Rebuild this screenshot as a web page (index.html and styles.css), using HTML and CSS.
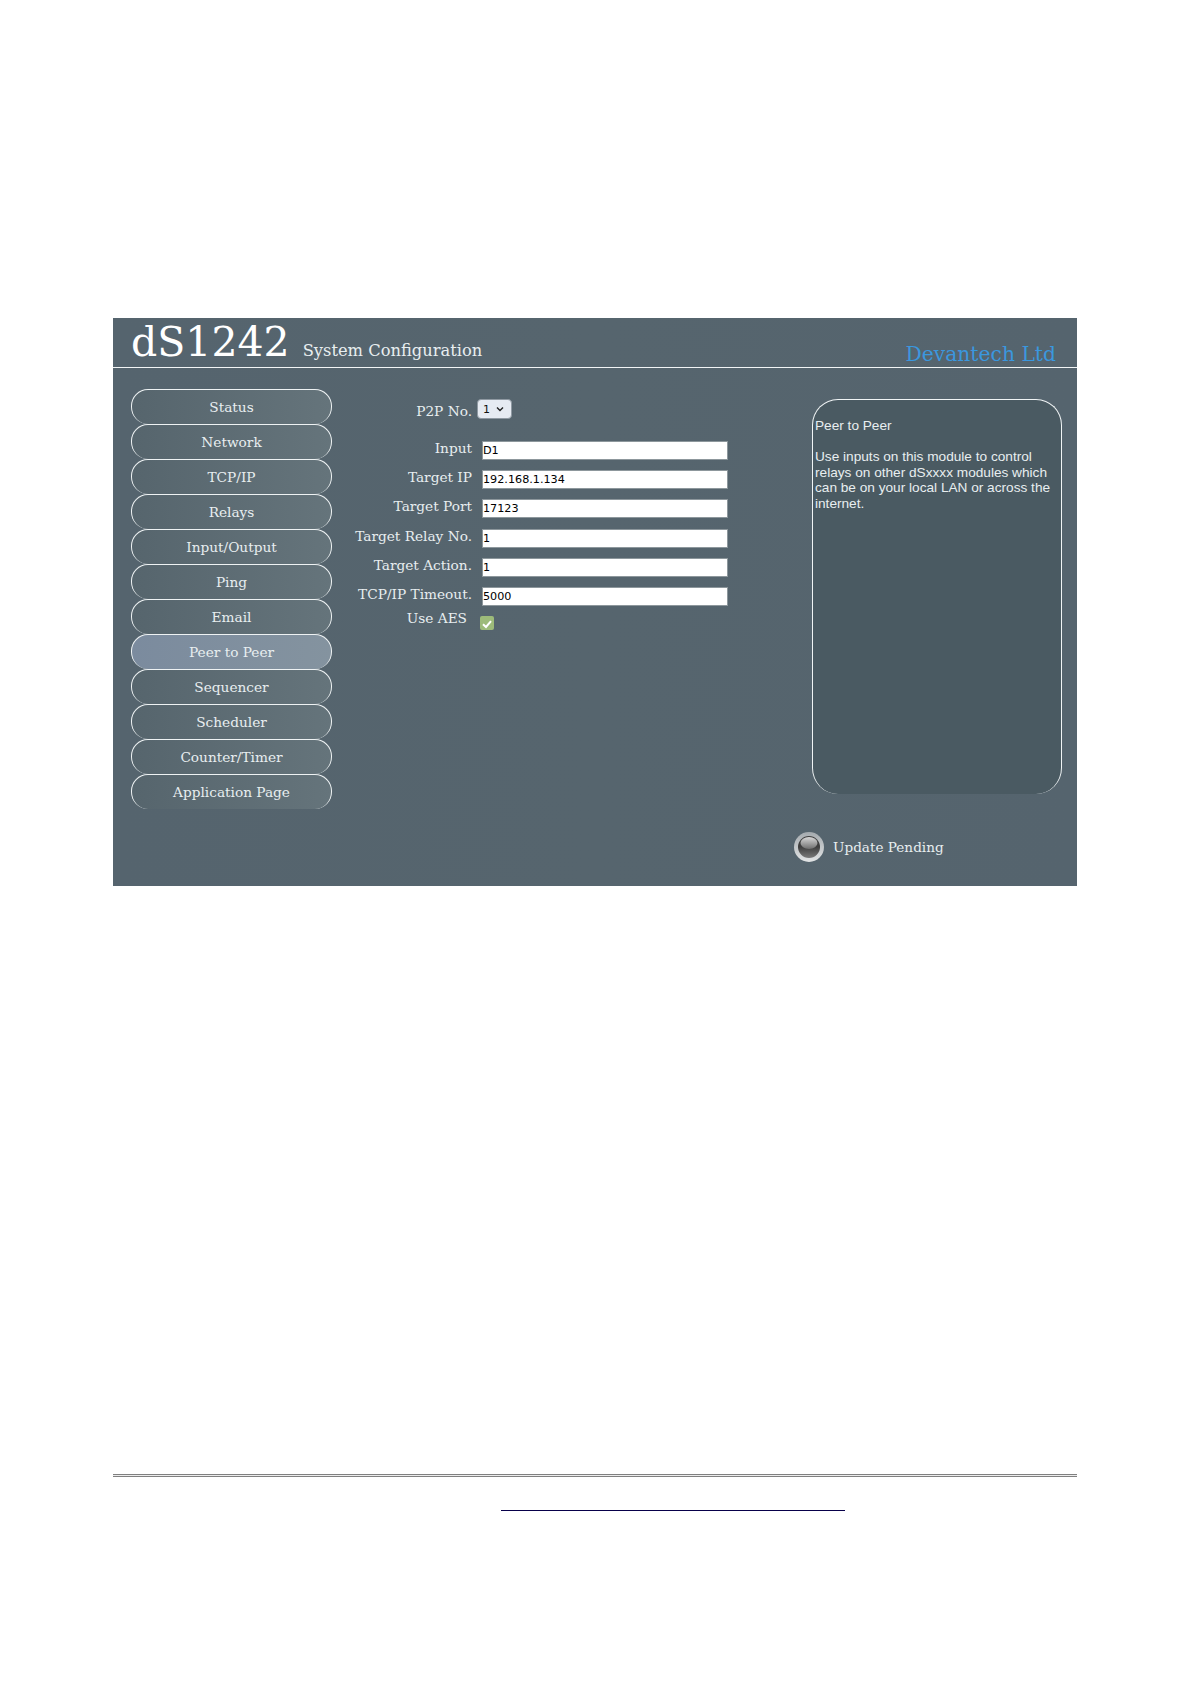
FILE: index.html
```html
<!DOCTYPE html>
<html lang="en">
<head>
    <meta charset="UTF-8">
    <title>dS1242 System Configuration</title>
    <link rel="stylesheet" href="styles.css">
</head>
<body>
    <div class="panel">
        <div class="header">
            <span class="model">dS1242</span>
            <span class="subtitle">System Configuration</span>
            <span class="brand">Devantech Ltd</span>
        </div>
        <div class="content">
            <div class="menu">
                <a class="menu-item">Status</a>
                <a class="menu-item">Network</a>
                <a class="menu-item">TCP/IP</a>
                <a class="menu-item">Relays</a>
                <a class="menu-item">Input/Output</a>
                <a class="menu-item">Ping</a>
                <a class="menu-item">Email</a>
                <a class="menu-item active">Peer to Peer</a>
                <a class="menu-item">Sequencer</a>
                <a class="menu-item">Scheduler</a>
                <a class="menu-item">Counter/Timer</a>
                <a class="menu-item">Application Page</a>
            </div>
            <div class="form">
                <div class="row select-row">
                    <label>P2P No.</label>
                    <div class="select">1 <svg width="8" height="6" viewBox="0 0 8 6"><path d="M1 1.5 L4 4.5 L7 1.5" fill="none" stroke="#222" stroke-width="1.4"/></svg></div>
                </div>
                <div class="row"><label>Input</label><input type="text" value="D1"></div>
                <div class="row"><label>Target IP</label><input type="text" value="192.168.1.134"></div>
                <div class="row"><label>Target Port</label><input type="text" value="17123"></div>
                <div class="row"><label>Target Relay No.</label><input type="text" value="1"></div>
                <div class="row"><label>Target Action.</label><input type="text" value="1"></div>
                <div class="row"><label>TCP/IP Timeout.</label><input type="text" value="5000"></div>
                <div class="row aes-row">
                    <label>Use AES</label>
                    <div class="check"><svg width="14" height="14" viewBox="0 0 14 14"><path d="M3 7.2 L6 10 L11 4.2" fill="none" stroke="#fff" stroke-width="2"/></svg></div>
                </div>
            </div>
            <div class="side">
                <div class="help">
                    <p>Peer to Peer</p>
                    <p>Use inputs on this module to control relays on other dSxxxx modules which can be on your local LAN or across the internet.</p>
                </div>
                <div class="pending">
                    <svg class="led" width="30" height="30" viewBox="0 0 30 30">
                        <defs>
                            <linearGradient id="ledRing" x1="0" y1="0" x2="0" y2="1">
                                <stop offset="0" stop-color="#a4aaae"/>
                                <stop offset="1" stop-color="#e2e4e5"/>
                            </linearGradient>
                            <linearGradient id="ledBody" x1="0" y1="0" x2="0" y2="1">
                                <stop offset="0.5" stop-color="#3f3f3f"/>
                                <stop offset="1" stop-color="#7a7a7a"/>
                            </linearGradient>
                            <linearGradient id="ledShine" x1="0" y1="0" x2="0" y2="1">
                                <stop offset="0" stop-color="#d8d8d8"/>
                                <stop offset="1" stop-color="#6e6e6e"/>
                            </linearGradient>
                        </defs>
                        <circle cx="15" cy="15" r="15" fill="url(#ledRing)"/>
                        <circle cx="15" cy="15" r="11" fill="url(#ledBody)"/>
                        <ellipse cx="15" cy="11" rx="8.5" ry="6" fill="url(#ledShine)"/>
                    </svg>
                    <span>Update Pending</span>
                </div>
            </div>
        </div>
    </div>
    <div class="rule"></div>
    <div class="footer"><a class="footer-link"></a></div>
</body>
</html>
```

FILE: styles.css
```css
body {
    margin: 0;
    background-color: #fff;
    font-family: "DejaVu Serif", serif;
    color: #e8eef0;
}
.panel {
    width: 964px;
    height: 568px;
    margin: 318px 0 0 113px;
    background: linear-gradient(90deg, #55646e 0%, #56656e 50%, #55646e 100%);
    display: flex;
    flex-direction: column;
}
.header {
    height: 50px;
    box-sizing: border-box;
    border-bottom: 1px solid #f2f5f6;
    display: flex;
    align-items: baseline;
    padding: 0 21px 0 18px;
    flex-shrink: 0;
    line-height: 49px;
}
.model {
    font-size: 41px;
    color: #fff;
    margin-right: 13px;
}
.subtitle {
    font-size: 16.3px;
}
.brand {
    align-self: flex-end;
    margin-left: auto;
    margin-bottom: 1px;
    font-size: 20.3px;
    line-height: 24px;
    color: #3b97de;
}
.content {
    display: flex;
    padding-top: 21px;
}
.menu {
    width: 201px;
    margin-left: 18px;
    display: flex;
    flex-direction: column;
}
.menu-item {
    height: 35px;
    box-sizing: border-box;
    border: 1px solid #eef2f3;
    border-bottom: 0;
    border-radius: 17px;
    background: linear-gradient(90deg, #56656d, #65747b);
    text-align: center;
    font-size: 13.7px;
    line-height: 35px;
}
.menu-item.active {
    background: linear-gradient(90deg, #7b8b9e, #84939f);
}
.form {
    width: 480px;
    padding-top: 10px;
}
.row {
    display: flex;
    height: 29.2px;
}
.row label {
    width: 140px;
    margin-right: 10px;
    text-align: right;
    font-size: 13.7px;
    line-height: 15px;
    white-space: nowrap;
}
.row input {
    width: 246px;
    height: 19px;
    box-sizing: border-box;
    border: 1px solid #8d979c;
    padding: 0;
    background: #fff;
    color: #000;
    font-family: "DejaVu Sans", sans-serif;
    font-size: 11.2px;
}
.select-row {
    height: 42px;
}
.select-row label {
    margin-right: 5px;
    padding-top: 5px;
}
.select {
    width: 35px;
    height: 20px;
    box-sizing: border-box;
    padding-left: 5px;
    background: #e6ebf2;
    border: 1px solid #8f99a2;
    border-radius: 4px;
    color: #111;
    font-family: "DejaVu Sans", sans-serif;
    font-size: 11px;
    line-height: 17px;
    display: flex;
    align-items: center;
    gap: 6px;
}
.aes-row {
    margin-top: -5px;
}
.aes-row label {
    width: 135px;
    margin-right: 13px;
}
.check {
    width: 14px;
    height: 14px;
    background: #9dbb7a;
    border-radius: 2px;
    margin-top: 5px;
}
.side {
    width: 250px;
    padding-top: 10px;
}
.help {
    height: 395px;
    box-sizing: border-box;
    border: 1px solid #f0f4f5;
    border-bottom: 0;
    border-radius: 26px;
    background: #4a5a62;
    padding: 18px 2px 0;
    font-family: "Liberation Sans", sans-serif;
    font-size: 13.65px;
    line-height: 15.5px;
}
.help p {
    margin: 0 0 15.5px;
}
.pending {
    display: flex;
    align-items: center;
    gap: 9px;
    margin: 38px 0 0 -18px;
    font-size: 13.6px;
}
.rule {
    width: 964px;
    height: 1px;
    margin: 588px 0 0 113px;
    border-top: 1px solid #808080;
    border-bottom: 1px solid #808080;
    background: #ececec;
}
.footer {
    margin: 33px 0 0 501px;
}
.footer-link {
    display: block;
    width: 344px;
    height: 1px;
    background: #08004a;
}
```
